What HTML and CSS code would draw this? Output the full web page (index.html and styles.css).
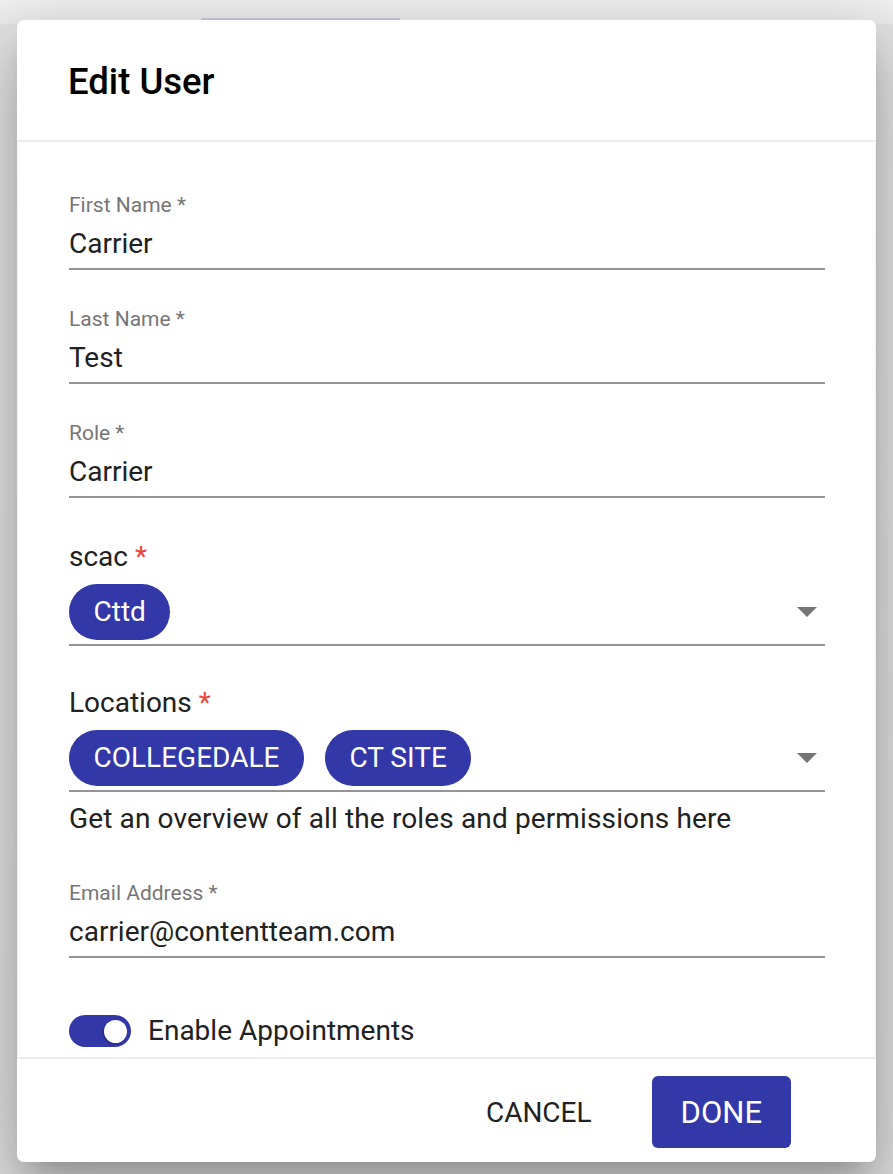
FILE: index.html
```html
<!DOCTYPE html>
<html lang="en">
<head>
<meta charset="utf-8">
<title>Edit User</title>
<link rel="stylesheet" href="styles.css">
</head>
<body>
<div class="dialog">
  <header class="dialog-title">
    <h2 class="title">Edit User</h2>
  </header>
  <div class="dialog-content">
    <div class="field">
      <div class="field-label">First Name *</div>
      <div class="field-input">Carrier</div>
    </div>
    <div class="field">
      <div class="field-label">Last Name *</div>
      <div class="field-input">Test</div>
    </div>
    <div class="field field-last">
      <div class="field-label">Role *</div>
      <div class="field-input">Carrier</div>
    </div>
    <div class="select-field">
      <div class="select-label">scac <span class="req">*</span></div>
      <div class="select-box">
        <div class="chips"><span class="chip">Cttd</span></div>
        <svg class="arrow" width="20" height="10" viewBox="0 0 20 10"><polygon points="0,0 20,0 10,10" fill="#757575"/></svg>
      </div>
    </div>
    <div class="select-field select-second">
      <div class="select-label">Locations <span class="req">*</span></div>
      <div class="select-box">
        <div class="chips"><span class="chip">COLLEGEDALE</span><span class="chip">CT SITE</span></div>
        <svg class="arrow" width="20" height="10" viewBox="0 0 20 10"><polygon points="0,0 20,0 10,10" fill="#757575"/></svg>
      </div>
    </div>
    <p class="helper">Get an overview of all the roles and permissions here</p>
    <div class="field field-email">
      <div class="field-label">Email Address *</div>
      <div class="field-input">carrier@contentteam.com</div>
    </div>
    <div class="switch-row">
      <span class="switch"><span class="thumb"></span></span>
      <span class="switch-text">Enable Appointments</span>
    </div>
  </div>
  <footer class="dialog-actions">
    <button class="btn btn-text">CANCEL</button>
    <button class="btn btn-primary">DONE</button>
  </footer>
</div>
</body>
</html>
```
FILE: styles.css
```css
html, body {
  margin: 0;
  padding: 0;
}
body {
  width: 893px;
  height: 1174px;
  overflow: hidden;
  font-family: Roboto, "Noto Sans", "Liberation Sans", sans-serif;
  background:
    linear-gradient(#cbc8dc, #cbc8dc) 201px 18px / 199px 2px no-repeat,
    linear-gradient(#f1f1f1 0, #ececec 24px, #e4e4e4 24px, #e0e0e0 100%);
}
.dialog {
  margin: 20px 0 0 17px;
  width: 859px;
  height: 1142px;
  background: #fff;
  border-radius: 7px;
  display: flex;
  flex-direction: column;
  overflow: hidden;
  box-shadow: 0 19px 26px -12px rgba(0,0,0,0.2), 0 40px 66px 5px rgba(0,0,0,0.14), 0 16px 80px 14px rgba(0,0,0,0.12);
}
.dialog-title {
  height: 120px;
  box-sizing: border-box;
  padding: 34px 51px 0;
  flex: none;
}
.title {
  margin: 0;
  font-size: 36.5px;
  line-height: 56px;
  font-weight: 500;
  color: #000;
}
.dialog-content {
  flex: 1;
  display: flex;
  flex-direction: column;
  border-top: 2px solid #ececec;
  border-bottom: 2px solid #ececec;
  border-left: 1px solid #efefef;
  border-right: 1px solid #efefef;
  padding: 51px 50px 0 51px;
  overflow: hidden;
}
.field {
  margin-bottom: 37px;
  border-bottom: 2px solid #949494;
}
.field-last {
  margin-bottom: 42px;
}
.field-label {
  font-size: 21px;
  line-height: 24px;
  color: #767676;
  margin-bottom: 10px;
}
.field-input {
  font-size: 28px;
  line-height: 34px;
  color: #212121;
  padding-bottom: 7px;
}
.select-label {
  font-size: 28px;
  line-height: 34px;
  color: #212121;
  margin-bottom: 10px;
}
.req {
  color: #f44336;
}
.select-box {
  display: flex;
  align-items: center;
  justify-content: space-between;
  padding-bottom: 4px;
  border-bottom: 2px solid #949494;
}
.select-second {
  margin-top: 40px;
}
.chips {
  display: flex;
  gap: 21px;
}
.chip {
  height: 56px;
  line-height: 56px;
  padding: 0 24.5px;
  border-radius: 28px;
  background: #3338a9;
  color: #fff;
  font-size: 28px;
}
.arrow {
  margin-right: 8px;
  display: block;
}
.helper {
  margin: 10px 0 0;
  font-size: 28px;
  line-height: 34px;
  letter-spacing: 0.13px;
  color: #212121;
}
.field-email {
  margin-top: 45px;
  margin-bottom: 0;
}
.switch-row {
  margin-top: 56px;
  display: flex;
  align-items: center;
  gap: 17px;
  height: 34px;
}
.switch {
  width: 62px;
  height: 32px;
  border-radius: 16px;
  background: #3338a9;
  display: flex;
  align-items: center;
  justify-content: flex-end;
  padding-right: 4px;
  box-sizing: border-box;
}
.thumb {
  width: 23px;
  height: 23px;
  border-radius: 50%;
  background: #fff;
  box-shadow: -1px 1px 2px rgba(0,0,0,0.3);
}
.switch-text {
  font-size: 28px;
  line-height: 34px;
  color: #212121;
}
.dialog-actions {
  height: 103px;
  flex: none;
  box-sizing: border-box;
  padding: 17px 85px 0 0;
  display: flex;
  justify-content: flex-end;
  align-items: flex-start;
  gap: 31px;
}
.btn {
  height: 72px;
  padding: 0 29px;
  border: none;
  border-radius: 6px;
  font-family: Roboto, "Noto Sans", "Liberation Sans", sans-serif;
  cursor: pointer;
}
.btn-text {
  background: transparent;
  color: #222;
  font-size: 28px;
  font-weight: 400;
}
.btn-primary {
  background: #3338a9;
  color: #fff;
  font-size: 31px;
  font-weight: 400;
}
```
